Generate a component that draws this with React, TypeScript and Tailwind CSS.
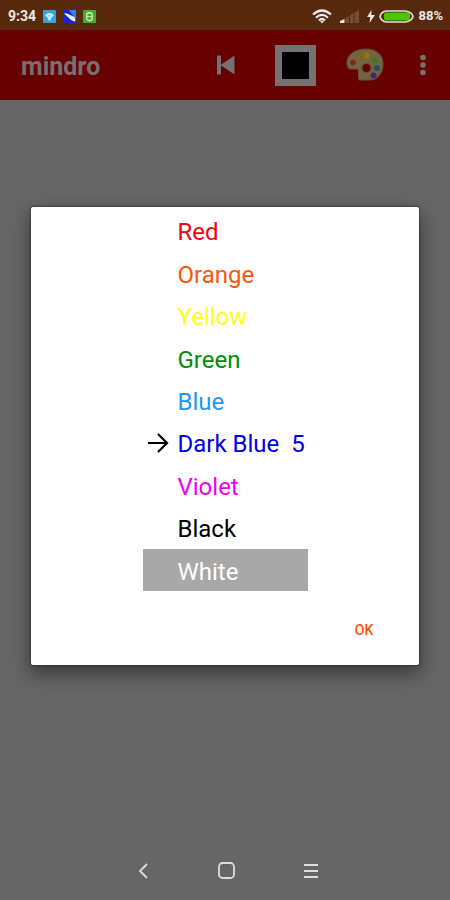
import React from 'react';

interface ColorOption {
  name: string;
  className: string;
  count?: number;
}

const COLORS: ColorOption[] = [
  { name: 'Red', className: 'text-[#f40010]' },
  { name: 'Orange', className: 'text-[#fb5607]' },
  { name: 'Yellow', className: 'text-[#ffff1a]' },
  { name: 'Green', className: 'text-[#008c0a]' },
  { name: 'Blue', className: 'text-[#1e96f5]' },
  { name: 'Dark Blue', className: 'text-[#0000e6]', count: 5 },
  { name: 'Violet', className: 'text-[#f000f0]' },
  { name: 'Black', className: 'text-black' },
  { name: 'White', className: 'bg-[#a8a8a8] text-white' },
];

const StatusBar: React.FC = () => (
  <div className="flex h-[30px] items-center justify-between bg-[#572a0e] pt-[2px] pr-[7px] pl-2 text-[#f0e8e4]">
    <div className="flex items-center gap-[7px]">
      <span className="text-sm font-bold">9:34</span>
      <svg className="size-[13px]" viewBox="0 0 13 13">
        <rect width="13" height="13" rx="1" fill="#35a3dc" />
        <path d="M2 5.2Q6.5 1 11 5.2L6.5 10Z" fill="#c9edfb" />
        <path d="M4.6 6.3Q6.5 4.8 8.4 6.3" stroke="#7cc8ec" fill="none" />
        <circle cx="6.5" cy="9.5" r="1.2" fill="#c9edfb" />
      </svg>
      <svg className="size-[13px]" viewBox="0 0 13 13">
        <rect width="13" height="13" rx="1" fill="#1824e0" />
        <path d="M6 0h6q1 0 1 1v9z" fill="#2f86f0" />
        <path d="M1 3.5Q4 2.5 7 5l4.5 2 1 4.5Q8 11 5.5 7.5z" fill="#f4f2ff" />
      </svg>
      <svg className="size-[13px]" viewBox="0 0 13 13">
        <rect width="13" height="13" rx="1" fill="#3fae2e" />
        <rect x="3.7" y="3" width="5.6" height="7.5" rx="2" fill="none" stroke="#cdeec4" strokeWidth="1.3" />
        <path d="M4 6.7h5M5 1.8l1 1.2M8 1.8L7 3" stroke="#cdeec4" />
      </svg>
    </div>
    <div className="flex items-center">
      <svg className="h-[15px] w-5" viewBox="0 0 20 15" fill="none" stroke="#f0e8e4" strokeWidth="2.2">
        <path d="M1 5.5Q10-2.5 19 5.5M4 8.7Q10 3 16 8.7M7 11.5Q10 8.5 13 11.5" />
        <path d="M8 12l2 2.5 2-2.5z" fill="#f0e8e4" stroke="none" />
      </svg>
      <svg className="ml-2 h-[13px] w-[19px]" viewBox="0 0 19 13">
        <path d="M0 13V11L4.5 9V13z" fill="#f0e8e4" />
        <path d="M5.5 13V8L9 6v7zM10 13V5l3.5-2v10zM14.5 13V2.5L19 0v13z" fill="#754c35" />
      </svg>
      <svg className="ml-2 h-[13px] w-2" viewBox="0 0 8 13">
        <path d="M4.5 0L0 7h3.2L2.5 13 8 5H4.3z" fill="#f0e8e4" />
      </svg>
      <svg className="ml-1 h-[13px] w-[35px]" viewBox="0 0 35 13">
        <path
          d="M7 1h19q7 1 8 5.5-1 4.5-8 5.5H7Q2 11 1 6.5 2 2 7 1z"
          fill="#572a0e"
          stroke="#e6ded6"
          strokeWidth="1.6"
        />
        <rect x="5" y="2.5" width="26" height="8" rx="2.5" fill="#48c800" />
      </svg>
      <span className="ml-1 text-[13px] font-bold">88%</span>
    </div>
  </div>
);

const PaletteIcon: React.FC = () => (
  <svg className="h-[34px] w-[38px]" viewBox="0 0 38 34">
    <path
      d="M20 1C9 1 1 7 1 15c0 4 1 6 4 6h6q1.5 0 1.5 2v7q0 2 2 2H24c7 0 13-7 13-16S30 1 20 1zM20.5 15.5a4.500 4.500 0 1 1 0 9 4.500 4.500 0 0 1 0-9z"
      fill="#776341"
      fillRule="evenodd"
      stroke="#5c5432"
      strokeWidth="1.2"
    />
    <circle cx="7" cy="14.5" r="2.8" fill="#7c2517" />
    <circle cx="13.5" cy="9" r="3" fill="#80660f" />
    <circle cx="21" cy="7.5" r="3" fill="#8a7b0c" />
    <circle cx="28.5" cy="12.5" r="3" fill="#467320" />
    <circle cx="31" cy="20" r="3" fill="#1c5573" />
    <circle cx="27.5" cy="27.5" r="3" fill="#4a2272" />
  </svg>
);

const AppBar: React.FC = () => (
  <header className="flex h-[70px] items-center bg-[#670000] pr-[15px] pl-[21px]">
    <h1 className="flex-1 pt-1 text-[25px] font-bold text-[#777070]">mindro</h1>
    <button type="button" aria-label="Previous" className="flex size-10 items-center justify-center">
      <svg className="h-5 w-[18px]" viewBox="0 0 18 20" fill="#777070">
        <path d="M0 .5h4v19H0zM17.500 .5v19L3.500 10z" />
      </svg>
    </button>
    <button
      type="button"
      aria-label="Current color"
      className="ml-[29px] size-[41px] border-7 border-[#777272] bg-black"
    />
    <button type="button" aria-label="Palette" className="ml-[30px] flex items-center">
      <PaletteIcon />
    </button>
    <button type="button" aria-label="More options" className="ml-[27px] flex w-6 justify-center">
      <svg className="h-[22px] w-[6px]" viewBox="0 0 6 22" fill="#777272">
        <circle cx="3" cy="3.5" r="2.8" />
        <circle cx="3" cy="11" r="2.8" />
        <circle cx="3" cy="18.5" r="2.8" />
      </svg>
    </button>
  </header>
);

const ColorDialog: React.FC = () => {
  const [selected, setSelected] = React.useState('Dark Blue');

  return (
    <div
      role="dialog"
      aria-label="Colors"
      className="flex w-full flex-col items-center rounded-xs bg-white pt-[3px] shadow-[0_8px_18px_2px_rgba(0,0,0,0.4),0_0_2px_1px_rgba(0,0,0,0.3)]"
    >
      <ul className="grid h-[382px] w-[165px] grid-rows-9">
        {COLORS.map((color) => (
          <li key={color.name} className="flex">
            <button
              type="button"
              onClick={() => setSelected(color.name)}
              className={`flex flex-1 items-center pt-[3px] text-2xl whitespace-pre ${color.className}`}
            >
              <span className="flex w-[35px] pl-1">
                {selected === color.name && (
                  <svg className="h-[22px] w-[22px]" viewBox="0 0 22 22" fill="none" stroke="#000" strokeWidth="2.2">
                    <path d="M1 10h19M11 1l9 9-9 9" />
                  </svg>
                )}
              </span>
              {color.name}
              {color.count !== undefined && `  ${color.count}`}
            </button>
          </li>
        ))}
      </ul>
      <div className="flex h-[73px] w-full items-center justify-end pt-[3px] pr-[29px]">
        <button type="button" className="h-9 w-[52px] text-sm font-medium text-[#ff5108]">
          OK
        </button>
      </div>
    </div>
  );
};

const NavBar: React.FC = () => (
  <nav className="flex h-[59px] items-center justify-center gap-[60px] pl-[3px] text-[#dedede]">
    <button type="button" aria-label="Back" className="flex size-6 items-center justify-center">
      <svg className="h-4 w-[10px]" viewBox="0 0 10 16" fill="none" stroke="currentColor" strokeWidth="1.8">
        <path d="M9 1L2 8l7 7" />
      </svg>
    </button>
    <button type="button" aria-label="Home" className="flex size-6 items-center justify-center">
      <svg className="size-[17px]" viewBox="0 0 17 17" fill="none" stroke="currentColor" strokeWidth="1.8">
        <rect x="1" y="1" width="15" height="15" rx="3.5" />
      </svg>
    </button>
    <button type="button" aria-label="Recent apps" className="flex size-6 items-center justify-center">
      <svg className="h-[14px] w-[14px]" viewBox="0 0 14 14" fill="none" stroke="currentColor" strokeWidth="2">
        <path d="M0 1h14M0 7h14M0 13h14" />
      </svg>
    </button>
  </nav>
);

export default function App() {
  return (
    <div className="flex min-h-screen flex-col bg-[#666] font-['Roboto',sans-serif]">
      <StatusBar />
      <div className="relative min-h-[560px] flex-1">
        <AppBar />
        {/* Modal layer sits over the app bar and canvas */}
        <div className="pointer-events-none absolute inset-0 flex items-center px-[31px] *:pointer-events-auto">
          <ColorDialog />
        </div>
      </div>
      <NavBar />
    </div>
  );
}
